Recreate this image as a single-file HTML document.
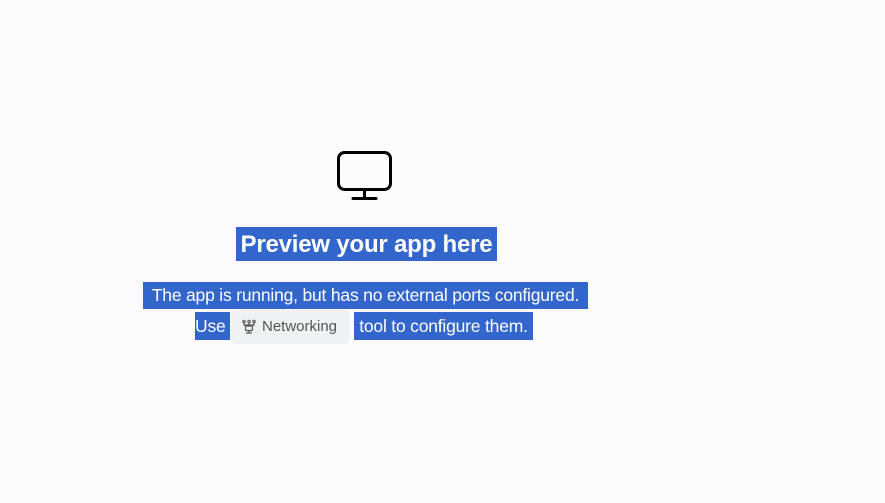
<!DOCTYPE html>
<html><head><style>
body{margin:0;width:885px;height:503px;background:#fcfcfd;font-family:"Liberation Sans",sans-serif;position:relative;overflow:hidden}
.s{position:absolute;background:#3366cc;color:#fff;white-space:nowrap;text-align:center}
</style></head><body>
<svg style="position:absolute;left:336px;top:150px" width="58" height="52" viewBox="0 0 58 52">
<rect x="2.5" y="2.5" width="52" height="37" rx="6" fill="none" stroke="#000" stroke-width="3"/>
<line x1="28.5" y1="40" x2="28.5" y2="48" stroke="#000" stroke-width="3"/>
<line x1="17" y1="48.5" x2="40" y2="48.5" stroke="#000" stroke-width="3" stroke-linecap="round"/>
</svg>
<div class="s" style="left:236px;top:227px;width:261px;height:34px;font-size:24px;font-weight:bold;line-height:35px;letter-spacing:-0.2px">Preview your app here</div>
<div class="s" style="left:143px;top:282px;width:445px;height:27px;font-size:17.5px;line-height:27px;letter-spacing:-0.2px">The app is running, but has no external ports configured.</div>
<div class="s" style="left:195px;top:312px;width:35px;height:28px;font-size:17.5px;line-height:28px;text-align:left;letter-spacing:-0.2px">Use</div>
<div style="position:absolute;left:231px;top:310px;width:119px;height:34px;background:#f0f1f3;border-radius:5px;color:#555;font-size:15px;line-height:33px">
<svg style="position:absolute;left:10px;top:9px" width="16" height="16" viewBox="0 0 16 16" fill="none" stroke="#555" stroke-width="1.2"><circle cx="3" cy="2.5" r="1.2"/><circle cx="8" cy="2.5" r="1.2"/><circle cx="13" cy="2.5" r="1.2"/><path d="M3 4v2h10V4M8 4v2"/><rect x="4.5" y="7" width="7" height="4.5" rx="1"/><path d="M8 11.5v2M5 14h6"/></svg>
<span style="position:absolute;left:31px">Networking</span></div>
<div class="s" style="left:354px;top:312px;width:179px;height:28px;font-size:17.5px;line-height:28px;letter-spacing:-0.2px">tool to configure them.</div>
</body></html>
